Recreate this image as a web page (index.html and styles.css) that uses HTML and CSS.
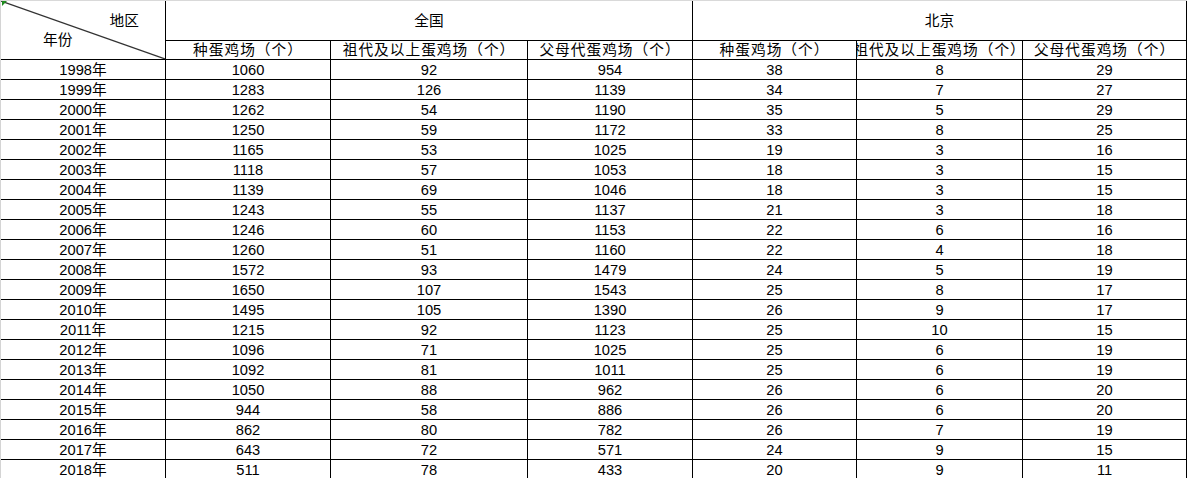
FILE: index.html
```html
<!DOCTYPE html>
<html lang="zh-CN">
<head>
<meta charset="utf-8">
<title>蛋鸡场</title>
<link rel="stylesheet" href="styles.css">
</head>
<body>
<div class="sheet">
  <div class="cell corner">
    <svg class="diag" viewBox="0 0 164 58" preserveAspectRatio="none"><line x1="0" y1="0" x2="164" y2="58" stroke="#333" stroke-width="1.2"/></svg>
    <span class="tri"></span>
    <span class="lbl-region">地区</span>
    <span class="lbl-year">年份</span>
  </div>
  <div class="cell group g-all">全国</div>
  <div class="cell group g-bj">北京</div>
  <div class="cell head">种蛋鸡场（个）</div>
  <div class="cell head">祖代及以上蛋鸡场（个）</div>
  <div class="cell head">父母代蛋鸡场（个）</div>
  <div class="cell head">种蛋鸡场（个）</div>
  <div class="cell head">祖代及以上蛋鸡场（个）</div>
  <div class="cell head">父母代蛋鸡场（个）</div>

  <div class="cell">1998年</div><div class="cell">1060</div><div class="cell">92</div><div class="cell">954</div><div class="cell">38</div><div class="cell">8</div><div class="cell">29</div>
  <div class="cell">1999年</div><div class="cell">1283</div><div class="cell">126</div><div class="cell">1139</div><div class="cell">34</div><div class="cell">7</div><div class="cell">27</div>
  <div class="cell">2000年</div><div class="cell">1262</div><div class="cell">54</div><div class="cell">1190</div><div class="cell">35</div><div class="cell">5</div><div class="cell">29</div>
  <div class="cell">2001年</div><div class="cell">1250</div><div class="cell">59</div><div class="cell">1172</div><div class="cell">33</div><div class="cell">8</div><div class="cell">25</div>
  <div class="cell">2002年</div><div class="cell">1165</div><div class="cell">53</div><div class="cell">1025</div><div class="cell">19</div><div class="cell">3</div><div class="cell">16</div>
  <div class="cell">2003年</div><div class="cell">1118</div><div class="cell">57</div><div class="cell">1053</div><div class="cell">18</div><div class="cell">3</div><div class="cell">15</div>
  <div class="cell">2004年</div><div class="cell">1139</div><div class="cell">69</div><div class="cell">1046</div><div class="cell">18</div><div class="cell">3</div><div class="cell">15</div>
  <div class="cell">2005年</div><div class="cell">1243</div><div class="cell">55</div><div class="cell">1137</div><div class="cell">21</div><div class="cell">3</div><div class="cell">18</div>
  <div class="cell">2006年</div><div class="cell">1246</div><div class="cell">60</div><div class="cell">1153</div><div class="cell">22</div><div class="cell">6</div><div class="cell">16</div>
  <div class="cell">2007年</div><div class="cell">1260</div><div class="cell">51</div><div class="cell">1160</div><div class="cell">22</div><div class="cell">4</div><div class="cell">18</div>
  <div class="cell">2008年</div><div class="cell">1572</div><div class="cell">93</div><div class="cell">1479</div><div class="cell">24</div><div class="cell">5</div><div class="cell">19</div>
  <div class="cell">2009年</div><div class="cell">1650</div><div class="cell">107</div><div class="cell">1543</div><div class="cell">25</div><div class="cell">8</div><div class="cell">17</div>
  <div class="cell">2010年</div><div class="cell">1495</div><div class="cell">105</div><div class="cell">1390</div><div class="cell">26</div><div class="cell">9</div><div class="cell">17</div>
  <div class="cell">2011年</div><div class="cell">1215</div><div class="cell">92</div><div class="cell">1123</div><div class="cell">25</div><div class="cell">10</div><div class="cell">15</div>
  <div class="cell">2012年</div><div class="cell">1096</div><div class="cell">71</div><div class="cell">1025</div><div class="cell">25</div><div class="cell">6</div><div class="cell">19</div>
  <div class="cell">2013年</div><div class="cell">1092</div><div class="cell">81</div><div class="cell">1011</div><div class="cell">25</div><div class="cell">6</div><div class="cell">19</div>
  <div class="cell">2014年</div><div class="cell">1050</div><div class="cell">88</div><div class="cell">962</div><div class="cell">26</div><div class="cell">6</div><div class="cell">20</div>
  <div class="cell">2015年</div><div class="cell">944</div><div class="cell">58</div><div class="cell">886</div><div class="cell">26</div><div class="cell">6</div><div class="cell">20</div>
  <div class="cell">2016年</div><div class="cell">862</div><div class="cell">80</div><div class="cell">782</div><div class="cell">26</div><div class="cell">7</div><div class="cell">19</div>
  <div class="cell">2017年</div><div class="cell">643</div><div class="cell">72</div><div class="cell">571</div><div class="cell">24</div><div class="cell">9</div><div class="cell">15</div>
  <div class="cell">2018年</div><div class="cell">511</div><div class="cell">78</div><div class="cell">433</div><div class="cell">20</div><div class="cell">9</div><div class="cell">11</div>
</div>
</body>
</html>
```

FILE: styles.css
```css
html, body {
  margin: 0;
  padding: 0;
  background: #ffffff;
  overflow: hidden;
}

body {
  font-family: "Liberation Sans", "Noto Sans CJK SC", sans-serif;
  font-size: 14.7px;
  color: #000000;
}

.sheet {
  display: grid;
  grid-template-columns: 165px 165px 197px 165px 164px 166px 164px;
  grid-template-rows: 40px 19px;
  grid-auto-rows: 20px;
  width: max-content;
  border-top: 1px solid #d9d9d9;
  border-left: 1px solid #d4d4d4;
}

.cell {
  box-sizing: border-box;
  border-right: 1px solid #000;
  border-bottom: 1px solid #000;
  display: flex;
  align-items: center;
  justify-content: center;
  overflow: hidden;
  white-space: nowrap;
  line-height: 18px;
  padding-top: 1px;
}

.corner {
  grid-row: 1 / 3;
  position: relative;
  flex-direction: column;
  align-items: stretch;
  justify-content: flex-start;
  padding-top: 12px;
}

.diag {
  position: absolute;
  left: 0;
  top: 0;
  width: 164px;
  height: 58px;
}

.tri {
  position: absolute;
  left: 1px;
  top: 0;
  width: 0;
  height: 0;
  border-top: 5px solid #1e8c1e;
  border-right: 5px solid transparent;
}

.lbl-region {
  align-self: flex-end;
  margin-right: 26px;
  line-height: 17px;
}

.lbl-year {
  align-self: flex-start;
  margin-left: 42px;
  margin-top: 2px;
  line-height: 17px;
}

.group {
  padding-top: 0;
}

.g-all {
  grid-column: 2 / 5;
}

.g-bj {
  grid-column: 5 / 8;
}

.head {
  padding-top: 0;
  text-spacing-trim: space-all;
  letter-spacing: 1px;
}
```
